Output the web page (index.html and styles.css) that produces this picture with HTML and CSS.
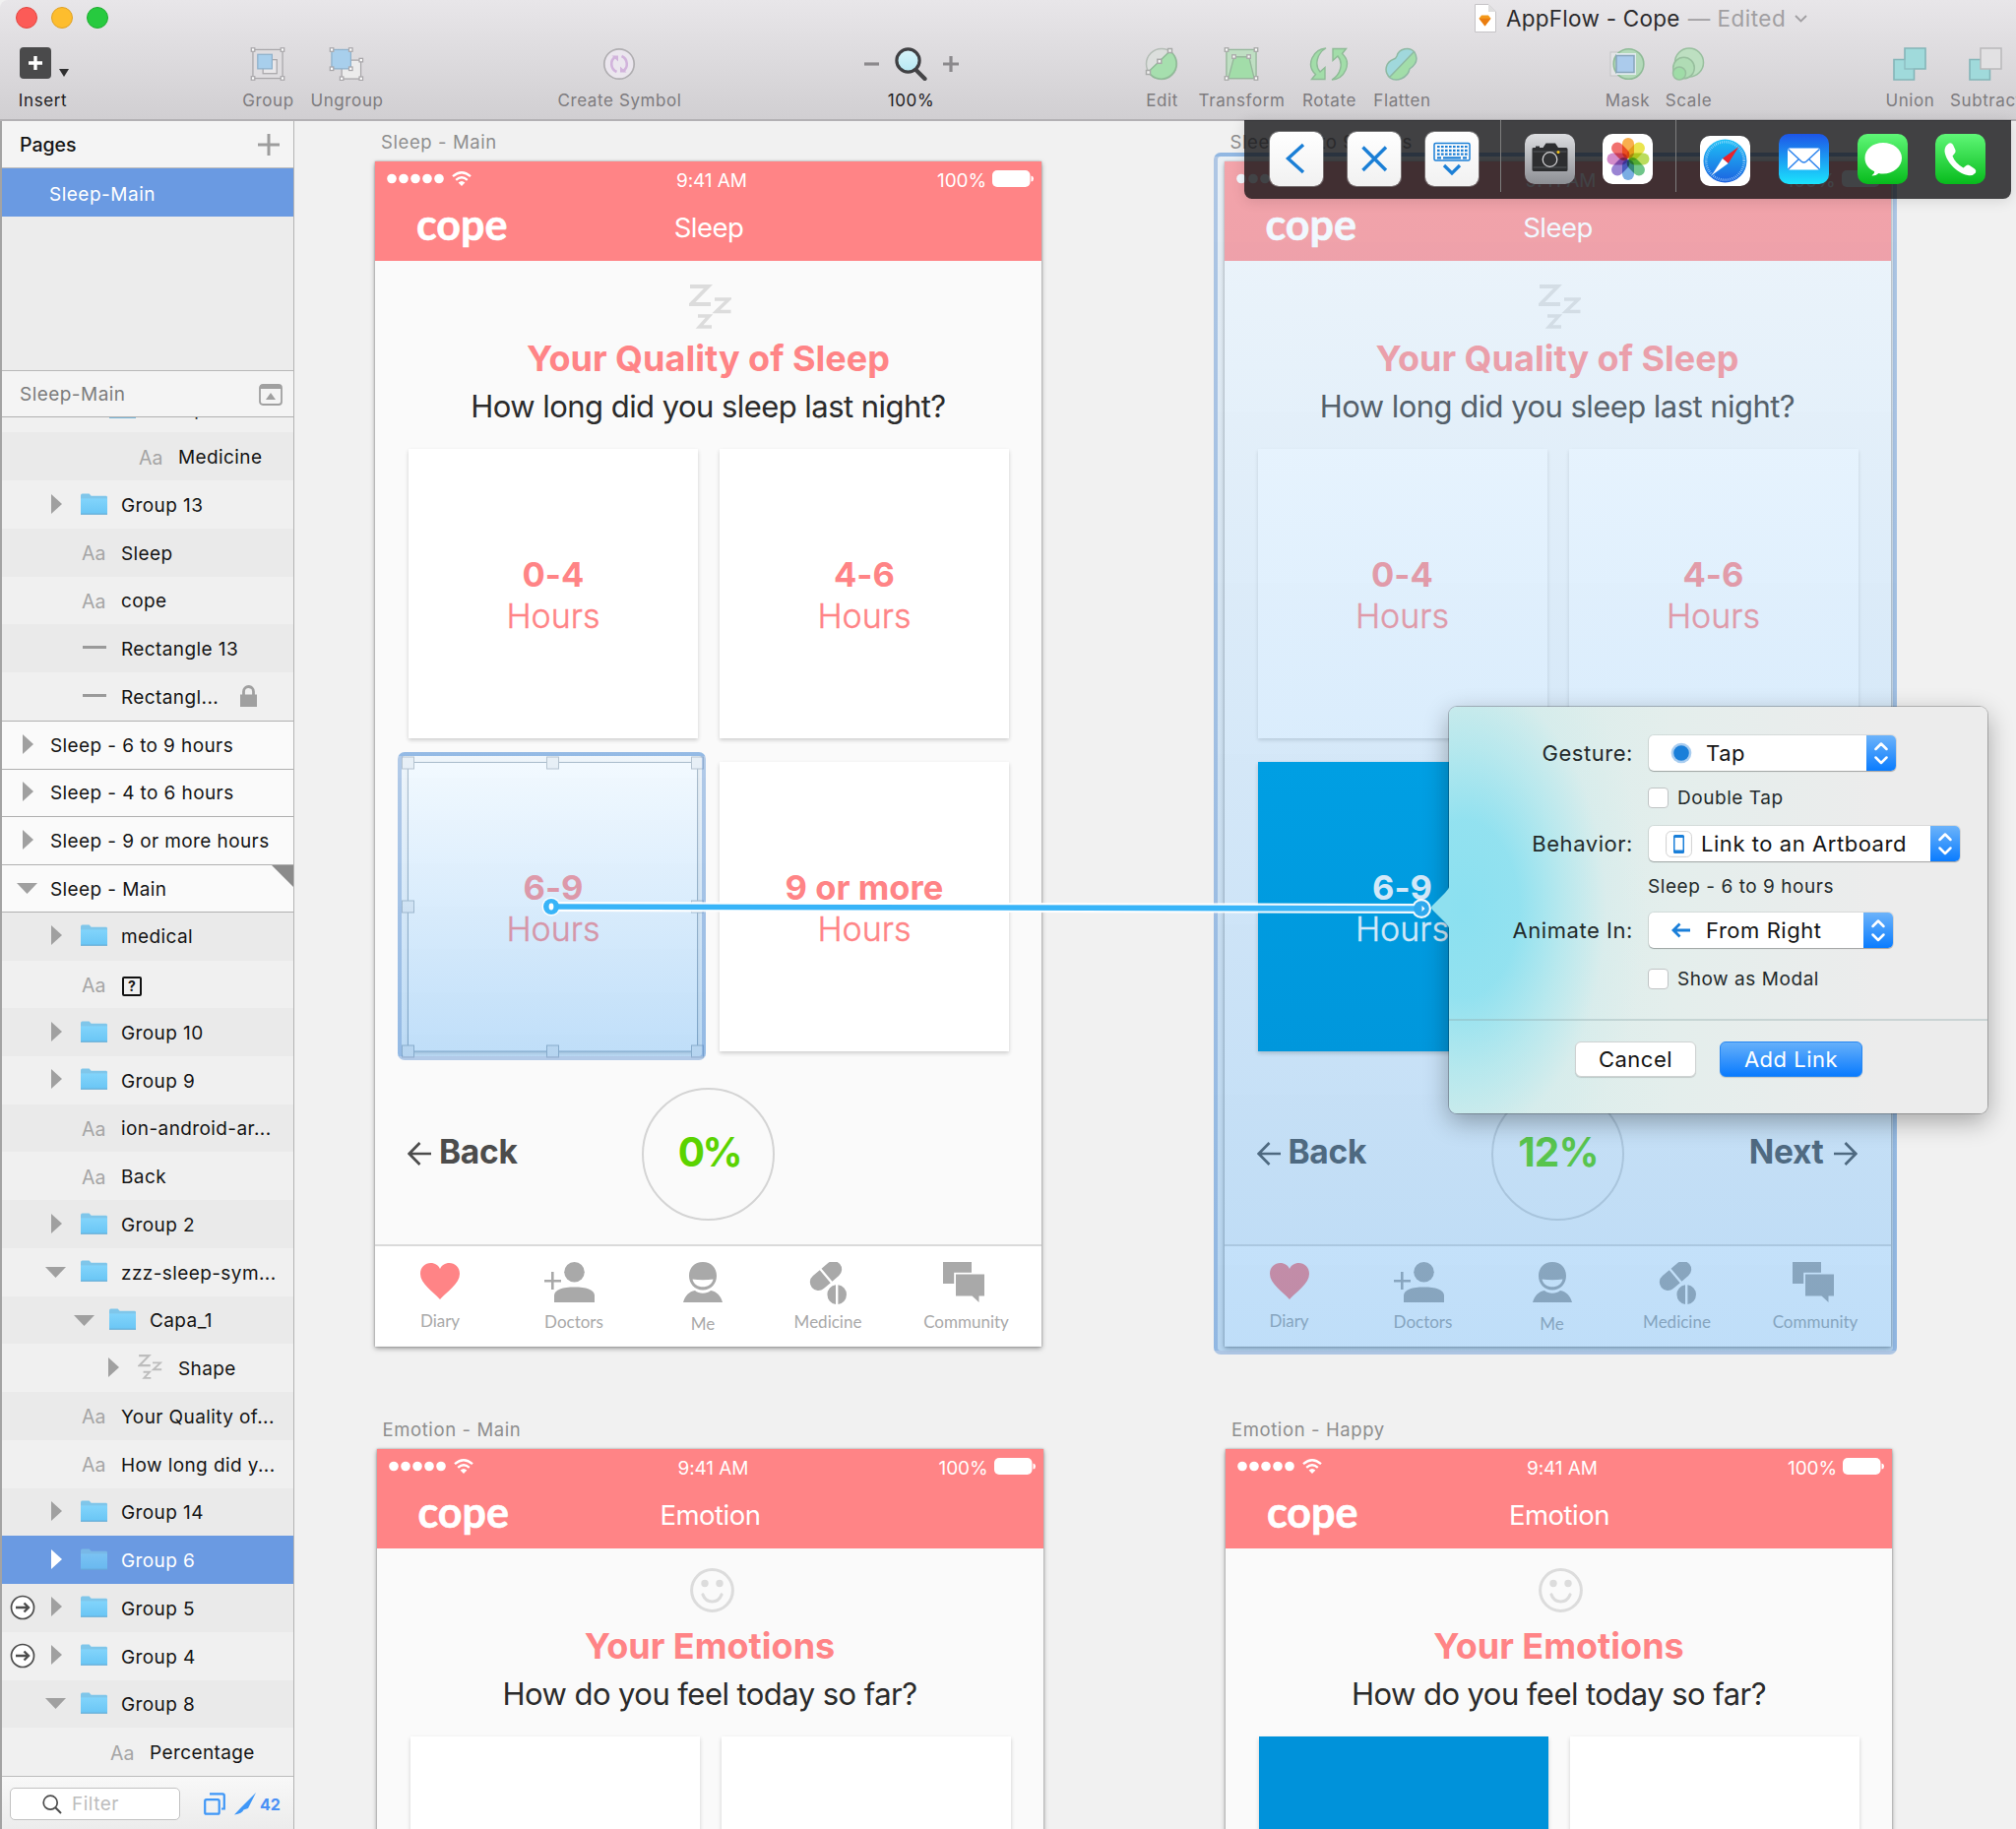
FILE: index.html
```html
<!DOCTYPE html>
<html lang="en">
<head>
<meta charset="utf-8">
<title>AppFlow - Cope</title>
<link rel="stylesheet" href="styles.css">
</head>
<body>
<svg class="defs" width="0" height="0" aria-hidden="true">
  <defs>
    <linearGradient id="g-folder" x1="0" y1="0" x2="0" y2="1"><stop offset="0" stop-color="#82d4fb"/><stop offset="1" stop-color="#6ac6f5"/></linearGradient>
    <linearGradient id="g-glass" x1="0" y1="0" x2="0" y2="1"><stop offset="0" stop-color="#d9f5fa"/><stop offset="1" stop-color="#b5e8f2"/></linearGradient>
    <linearGradient id="g-safari" x1="0" y1="0" x2="0" y2="1"><stop offset="0" stop-color="#1fc1f6"/><stop offset="1" stop-color="#1c62e0"/></linearGradient>
    <linearGradient id="g-cam" x1="0" y1="0" x2="0" y2="1"><stop offset="0" stop-color="#dcdde0"/><stop offset="1" stop-color="#8d8f94"/></linearGradient>
  </defs>
  <symbol id="folder" viewBox="0 0 27 22"><path d="M0 2.5Q0 .6 1.6.6H8.6L10.6 2.8H25.6Q27 2.8 27 4.2V21.4H0Z" fill="#7fc6ea"/><path d="M0 5.4H27V20.8H0Z" fill="url(#g-folder)"/><path d="M0 21.2H27" stroke="#5fa9d3" stroke-width="1"/></symbol>
  <symbol id="tri-r" viewBox="0 0 11 20"><path d="M0 0L11 10L0 20Z" fill="currentColor"/></symbol>
  <symbol id="tri-d" viewBox="0 0 21 11"><path d="M0 0H21L10.500 11Z" fill="currentColor"/></symbol>
  <symbol id="zzz" viewBox="0 0 43 45"><g fill="none" stroke="currentColor"><path d="M1 2H19.500L2 20H22" stroke-width="3.800"/><path d="M26 15H40.500L27.500 27.500H42.500" stroke-width="3.400"/><path d="M9 32H20.500L10.500 43H23" stroke-width="3.400"/></g></symbol>
  <symbol id="smile" viewBox="0 0 45 45"><circle cx="22.500" cy="22.500" r="20.900" fill="none" stroke="currentColor" stroke-width="3"/><circle cx="15" cy="15.500" r="3.700" fill="currentColor"/><circle cx="30" cy="15.500" r="3.700" fill="currentColor"/><path d="M13 27C15 32 18.500 34 22.500 34S30 32 32 27" fill="none" stroke="currentColor" stroke-width="3.200" stroke-linecap="round"/></symbol>
  <symbol id="dots" viewBox="0 0 58 11"><g fill="currentColor"><circle cx="5" cy="5.500" r="4.800"/><circle cx="17" cy="5.500" r="4.800"/><circle cx="29" cy="5.500" r="4.800"/><circle cx="41" cy="5.500" r="4.800"/><circle cx="53" cy="5.500" r="4.800"/></g></symbol>
  <symbol id="wifi" viewBox="0 0 20 15"><g fill="none" stroke="currentColor" stroke-width="2.300"><path d="M1 5.200Q10-2.800 19 5.200"/><path d="M4.200 8.800Q10 3.800 15.800 8.800"/></g><path d="M6.600 11.400Q10 8.400 13.400 11.400L10 15Z" fill="currentColor"/></symbol>
  <symbol id="battery" viewBox="0 0 42 17"><rect width="38.500" height="17" rx="5" fill="currentColor"/><path d="M39.500 5.500Q42 6 42 8.500T39.500 11.500Z" fill="currentColor"/></symbol>
  <symbol id="heart" viewBox="0 0 40 37"><path d="M20 37C13 29 0 21 0 11C0 4 5 0 10.500 0C15 0 18.500 2.500 20 6C21.500 2.500 25 0 29.500 0C35 0 40 4 40 11C40 21 27 29 20 37Z" fill="currentColor"/></symbol>
  <symbol id="doctor" viewBox="0 0 51 41"><g fill="currentColor"><circle cx="30.500" cy="10.300" r="10.300"/><path d="M10 41V34C10 28 19 25.500 30.500 25.500S51 28 51 34V41Z"/><path d="M7 10H9.600V18H17V20.600H9.600V28H7V20.600H0V18H7Z"/></g></symbol>
  <symbol id="me" viewBox="0 0 40 41"><g fill="currentColor"><path d="M20 0C28.500 0 34 6 34 14S28.500 28.500 20 28.500S6 22 6 14S11.500 0 20 0ZM9.500 17.500C10.500 22.500 15 25.300 20 25.300S29.500 22.500 30.500 17.500Q20 19 9.500 17.500Z"/><path d="M0 41C2 34 6 30 12 29C16 32.500 24 32.500 28 29C34 30 38 34 40 41Z"/></g></symbol>
  <symbol id="pills" viewBox="0 0 38 43"><g transform="rotate(-40 17 14)"><path d="M16 5.500H7A8.500 8.500 0 0 0 7 22.500H16Z" fill="currentColor"/><path d="M18.300 5.500H27A8.500 8.500 0 0 1 27 22.500H18.300Z" fill="currentColor"/></g><path d="M27 23.200A10 10 0 0 0 27 43ZM29.400 23.200A10 10 0 0 1 29.400 43Z" fill="currentColor"/></symbol>
  <symbol id="chat" viewBox="0 0 42 41"><path d="M0 0H29V10.800H11.200V22H0Z" fill="currentColor"/><path d="M13 12.500H42V34.500H36.500V41L29.500 34.500H13Z" fill="currentColor"/></symbol>
  <symbol id="arrow-l" viewBox="0 0 24 24"><path d="M24 12H2M12.500 1L1.700 12L12.500 23" fill="none" stroke="currentColor" stroke-width="2.700"/></symbol>
  <symbol id="arrow-r" viewBox="0 0 24 24"><path d="M0 12H22M11.500 1L22.300 12L11.500 23" fill="none" stroke="currentColor" stroke-width="2.700"/></symbol>
  <symbol id="go" viewBox="0 0 26 26"><circle cx="13" cy="13" r="11.500" fill="#fff" stroke="#4d4d4d" stroke-width="1.700"/><path d="M6 13H18M14.500 8.500L19 13L14.500 17.500" fill="none" stroke="#4d4d4d" stroke-width="2.400"/></symbol>
  <symbol id="updown" viewBox="0 0 30 36"><path d="M9.500 14L15 8.500L20.500 14M9.500 22.500L15 28L20.500 22.500" fill="none" stroke="#fff" stroke-width="2.500" stroke-linecap="round" stroke-linejoin="round"/></symbol>
</svg>

<div class="window">
  <header class="titlebar">
    <div class="title-row">
      <div class="lights"><i class="light red"></i><i class="light yellow"></i><i class="light green"></i></div>
      <div class="doc">
        <svg class="doc-icon" viewBox="0 0 22 29"><path d="M.5.5H14L21.500 8V28.500H.5Z" fill="#fff" stroke="#c5c3c6"/><path d="M14 .5V8H21.500Z" fill="#dedede"/><path d="M7 11.500H14L16.500 14.800L10.500 22.500L4.500 14.800Z" fill="#f49a1c"/><path d="M4.500 14.800H16.500L10.500 22.500Z" fill="#ea7d11"/></svg>
        <span class="doc-name">AppFlow - Cope</span><span class="doc-state">— Edited</span>
        <svg class="doc-chev" viewBox="0 0 13 8"><path d="M1 1L6.500 6.500L12 1" fill="none" stroke="#a19fa2" stroke-width="1.800"/></svg>
      </div>
    </div>
    <nav class="tools">
      <div class="tool t-insert strong">
        <div class="insert"><svg width="32" height="32" viewBox="0 0 32 32"><rect width="32" height="32" rx="4" fill="#4a4a4b"/><path d="M16 9V23M9 16H23" stroke="#fff" stroke-width="3.400"/></svg><svg width="10" height="8" viewBox="0 0 10 8"><path d="M0 0H10L5 8Z" fill="#2f2f30"/></svg></div>
        <span>Insert</span>
      </div>
      <div class="tool t-group">
        <svg width="36" height="35" viewBox="0 0 36 35" fill="#e9e7e9" stroke="#a9a7aa" stroke-width="1.300"><rect x="2.500" y="2.500" width="31" height="30" fill="#dfdde0"/><rect x="13" y="13" width="14.500" height="14.500"/><rect x="7.500" y="7.500" width="15" height="15" fill="#a8cfec" stroke="#8fb1cb"/><g fill="#fff"><rect x=".8" y=".8" width="3.600" height="3.600"/><rect x="31.600" y=".8" width="3.600" height="3.600"/><rect x=".8" y="30.600" width="3.600" height="3.600"/><rect x="31.600" y="30.600" width="3.600" height="3.600"/></g></svg>
        <span>Group</span>
      </div>
      <div class="tool t-group2">
        <svg width="36" height="35" viewBox="0 0 36 35" fill="#ececec" stroke="#a9a7aa" stroke-width="1.300"><rect x="13" y="13.500" width="20" height="19.500"/><rect x="2.500" y="2.500" width="20" height="20" fill="#a8cfec" stroke="#8fb1cb"/><g fill="#fff"><rect x=".8" y=".8" width="3.600" height="3.600"/><rect x="20.600" y=".8" width="3.600" height="3.600"/><rect x=".8" y="20.600" width="3.600" height="3.600"/><rect x="20.600" y="20.600" width="3.600" height="3.600"/><rect x="31.400" y="11.700" width="3.600" height="3.600"/><rect x="31.400" y="30.900" width="3.600" height="3.600"/><rect x="11.200" y="30.900" width="3.600" height="3.600"/></g></svg>
        <span>Ungroup</span>
      </div>
      <div class="tool t-symbol">
        <svg width="34" height="34" viewBox="0 0 34 34"><circle cx="17" cy="17" r="15.200" fill="#ebe6ee" stroke="#b0aeb1" stroke-width="1.700"/><g fill="none" stroke="#d2b4dc" stroke-width="2.600"><path d="M14.500 25C8 22 7.500 13.500 13 9.800"/><path d="M19.500 9C26 12 26.500 20.500 21 24.200"/></g><path d="M9.500 8.500H16V14.500ZM24.500 25.500H18V19.500Z" fill="#d2b4dc"/></svg>
        <span>Create Symbol</span>
      </div>
      <div class="tool t-zoom strong">
        <div class="zoomer"><svg width="15" height="16" viewBox="0 0 15 16"><path d="M0 8H15" stroke="#8b898c" stroke-width="3.200"/></svg><svg width="33" height="34" viewBox="0 0 33 34"><path d="M20 21.500L30.500 32" stroke="#454547" stroke-width="4.200" stroke-linecap="round"/><circle cx="13.500" cy="13.500" r="11.600" fill="url(#g-glass)" stroke="#404043" stroke-width="3.200"/></svg><svg width="16" height="16" viewBox="0 0 16 16"><path d="M0 8H16M8 0V16" stroke="#8b898c" stroke-width="3.200"/></svg></div>
        <span>100%</span>
      </div>
      <div class="tool t-edit">
        <svg width="34" height="34" viewBox="0 0 34 34" stroke="#8fbb97" stroke-width="1.500"><circle cx="17" cy="17" r="15.500" fill="#dcdfdd" stroke="#b4bdb6"/><path d="M25.500 4A15.500 15.500 0 1 1 3.500 25Z" fill="#a6dfae"/><g fill="#f3f3f3" stroke="#a9aaa9"><rect x="23.500" y="1.500" width="4" height="4"/><rect x="12.800" y="12.300" width="4" height="4"/><rect x="1.500" y="23.500" width="4" height="4"/></g></svg>
        <span>Edit</span>
      </div>
      <div class="tool t-transform">
        <svg width="36" height="35" viewBox="0 0 36 35" stroke="#97b79c" stroke-width="1.400"><rect x="2.500" y="2.500" width="31" height="30" fill="#bfdfc3"/><path d="M10.500 10H26L31.500 32.500H4.500Z" fill="#a2dda9"/><g fill="#fff" stroke="#a9aaa9"><rect x=".8" y=".8" width="3.600" height="3.600"/><rect x="31.600" y=".8" width="3.600" height="3.600"/><rect x=".8" y="30.600" width="3.600" height="3.600"/><rect x="31.600" y="30.600" width="3.600" height="3.600"/><rect x="8.500" y="8" width="3.600" height="3.600"/><rect x="24" y="8" width="3.600" height="3.600"/></g></svg>
        <span>Transform</span>
      </div>
      <div class="tool t-rotate">
        <svg width="40" height="34" viewBox="0 0 40 34" fill="#a2dda9" stroke="#8fbb97" stroke-width="1.400"><path d="M17 1C4 2 -4 18 6.500 27.500L2.500 32.500H16V20.500L11 25C5 18 8 6 17 1Z"/><path d="M23 33C36 32 44 16 33.500 6.500L37.500 1.500H24V13.500L29 9C35 16 32 28 23 33Z"/></svg>
        <span>Rotate</span>
      </div>
      <div class="tool t-flatten">
        <svg width="34" height="34" viewBox="0 0 34 34"><path d="M12 9C14 1 25 -1 30 5C34 12 31 18 25 22C23 31 12 36 5 31C-2 24 1 15 9 12Q11 11.500 12 9Z" fill="#a2dda9"/><path d="M29 5C24 -1 14 1 12 9Q11 11.500 9 12C1 15 -2 24 5 30Z" fill="#a0d8dc"/><path d="M12 9C14 1 25 -1 30 5C34 12 31 18 25 22C23 31 12 36 5 31C-2 24 1 15 9 12Q11 11.500 12 9ZM29 5L5 30" fill="none" stroke="#8fb9a3" stroke-width="1.500"/></svg>
        <span>Flatten</span>
      </div>
      <div class="tool t-mask">
        <svg width="36" height="34" viewBox="0 0 36 34"><rect x="1" y="5" width="25" height="24" fill="#e4e4e6" stroke="#c4c3c5"/><circle cx="19.500" cy="17" r="15.300" fill="#b3d9b9" stroke="#8fbb97" stroke-width="1.600"/><path d="M7 6H27V28H7Z" fill="#e2ebee"/><rect x="7" y="8.500" width="18" height="17" fill="#abcbec" stroke="#88a5bb" stroke-width="1.500"/></svg>
        <span>Mask</span>
      </div>
      <div class="tool t-scale">
        <svg width="34" height="34" viewBox="0 0 34 34" stroke="#98bf9e" stroke-width="1.500"><circle cx="18" cy="15.500" r="14.500" fill="#bddfc1"/><circle cx="12.500" cy="21" r="10.800" fill="#b0dcb5"/><circle cx="8" cy="26.500" r="6.500" fill="#9fdca7"/></svg>
        <span>Scale</span>
      </div>
      <div class="tool t-union">
        <svg width="34" height="34" viewBox="0 0 34 34"><path d="M12 1H33V22H21.500V33H1V12.500H12Z" fill="#a0dadb" stroke="#84b5b8" stroke-width="1.600"/><path d="M12 12.500V22H21.500" fill="none" stroke="#8fbfc2" stroke-width="1.500"/></svg>
        <span>Union</span>
      </div>
      <div class="tool t-subtract">
        <svg width="34" height="34" viewBox="0 0 34 34"><path d="M1 12.500H21.500V33H1Z" fill="#a0dadb" stroke="#84b5b8" stroke-width="1.600"/><rect x="12" y="1" width="21" height="21" fill="#e2e1e3" stroke="#b9b8ba" stroke-width="1.500"/></svg>
        <span>Subtract</span>
      </div>
    </nav>
  </header>

  <div class="main">
    <aside class="sidebar">
      <div class="pages-head"><span>Pages</span><svg width="22" height="22" viewBox="0 0 22 22"><path d="M11 0V22M0 11H22" stroke="#9d9d9d" stroke-width="3"/></svg></div>
      <div class="page-item">Sleep-Main</div>
      <div class="pages-rest"></div>
      <div class="layers-head"><span>Sleep-Main</span><svg width="24" height="22" viewBox="0 0 24 22"><rect x="1" y="1" width="22" height="20" rx="3" fill="none" stroke="#a0a0a0" stroke-width="1.800"/><path d="M1 1.500H23V5H1Z" fill="#a0a0a0"/><path d="M12 9L17 16H7Z" fill="#a0a0a0"/></svg></div>
      <div class="layers">
        <div class="row l2"><svg class="ic"><use href="#folder"/></svg><b>Group</b></div>
        <div class="row l3"><i class="aa">Aa</i><b>Medicine</b></div>
        <div class="row l1"><svg class="tr"><use href="#tri-r"/></svg><svg class="ic"><use href="#folder"/></svg><b>Group 13</b></div>
        <div class="row l1"><i class="aa">Aa</i><b>Sleep</b></div>
        <div class="row l1"><i class="aa">Aa</i><b>cope</b></div>
        <div class="row l1"><i class="dash"></i><b>Rectangle 13</b></div>
        <div class="row l1"><i class="dash"></i><b>Rectangl...</b><svg class="lock" viewBox="0 0 17 22"><path d="M3.500 10V6.500A5 5 0 0 1 13.500 6.500V10" fill="none" stroke="#a0a0a0" stroke-width="2.800"/><rect y="9.500" width="17" height="12.500" fill="#a0a0a0"/></svg></div>
        <div class="row board"><svg class="tr"><use href="#tri-r"/></svg><b>Sleep - 6 to 9 hours</b></div>
        <div class="row board"><svg class="tr"><use href="#tri-r"/></svg><b>Sleep - 4 to 6 hours</b></div>
        <div class="row board"><svg class="tr"><use href="#tri-r"/></svg><b>Sleep - 9 or more hours</b></div>
        <div class="row board open"><svg class="td"><use href="#tri-d"/></svg><b>Sleep - Main</b><i class="corner"></i></div>
        <div class="row l1"><svg class="tr"><use href="#tri-r"/></svg><svg class="ic"><use href="#folder"/></svg><b>medical</b></div>
        <div class="row l1"><i class="aa">Aa</i><b class="unknown">?</b></div>
        <div class="row l1"><svg class="tr"><use href="#tri-r"/></svg><svg class="ic"><use href="#folder"/></svg><b>Group 10</b></div>
        <div class="row l1"><svg class="tr"><use href="#tri-r"/></svg><svg class="ic"><use href="#folder"/></svg><b>Group 9</b></div>
        <div class="row l1"><i class="aa">Aa</i><b>ion-android-ar...</b></div>
        <div class="row l1"><i class="aa">Aa</i><b>Back</b></div>
        <div class="row l1"><svg class="tr"><use href="#tri-r"/></svg><svg class="ic"><use href="#folder"/></svg><b>Group 2</b></div>
        <div class="row l1"><svg class="td"><use href="#tri-d"/></svg><svg class="ic"><use href="#folder"/></svg><b>zzz-sleep-sym...</b></div>
        <div class="row l2"><svg class="td"><use href="#tri-d"/></svg><svg class="ic"><use href="#folder"/></svg><b>Capa_1</b></div>
        <div class="row l3"><svg class="tr"><use href="#tri-r"/></svg><svg class="ic zz"><use href="#zzz"/></svg><b>Shape</b></div>
        <div class="row l1"><i class="aa">Aa</i><b>Your Quality of...</b></div>
        <div class="row l1"><i class="aa">Aa</i><b>How long did y...</b></div>
        <div class="row l1"><svg class="tr"><use href="#tri-r"/></svg><svg class="ic"><use href="#folder"/></svg><b>Group 14</b></div>
        <div class="row l1 selected"><svg class="tr"><use href="#tri-r"/></svg><svg class="ic"><use href="#folder"/></svg><b>Group 6</b></div>
        <div class="row l1"><svg class="go"><use href="#go"/></svg><svg class="tr"><use href="#tri-r"/></svg><svg class="ic"><use href="#folder"/></svg><b>Group 5</b></div>
        <div class="row l1"><svg class="go"><use href="#go"/></svg><svg class="tr"><use href="#tri-r"/></svg><svg class="ic"><use href="#folder"/></svg><b>Group 4</b></div>
        <div class="row l1"><svg class="td"><use href="#tri-d"/></svg><svg class="ic"><use href="#folder"/></svg><b>Group 8</b></div>
        <div class="row l2"><i class="aa">Aa</i><b>Percentage</b></div>
      </div>
      <div class="filter">
        <div class="filter-box"><svg width="20" height="20" viewBox="0 0 20 20"><circle cx="8.200" cy="8.200" r="7" fill="none" stroke="#4b4b4b" stroke-width="1.700"/><path d="M13.300 13.300L19 19" stroke="#4b4b4b" stroke-width="2"/></svg><span>Filter</span></div>
        <svg width="22" height="23" viewBox="0 0 22 23"><rect x="1.200" y="7.200" width="14.500" height="14.500" rx="1.500" fill="none" stroke="#3f97f7" stroke-width="2.200"/><path d="M6 1.300H19Q20.800 1.300 20.800 3V16.500H18" fill="none" stroke="#3f97f7" stroke-width="2.200"/></svg>
        <svg width="22" height="23" viewBox="0 0 22 23"><path d="M22 0L14 16L9.500 17.500Q8 21.500 0 22.500L7.500 14.500Z" fill="#3f97f7"/></svg>
        <span class="count">42</span>
      </div>
    </aside>

    <section class="canvas">
      <article class="artboard pos-a">
        <h2>Sleep - Main</h2>
        <div class="screen">
          <div class="app-head">
            <div class="status"><svg class="dots"><use href="#dots"/></svg><svg class="wifi"><use href="#wifi"/></svg><span class="time">9:41 AM</span><span class="pct">100%</span><svg class="battery"><use href="#battery"/></svg></div>
            <div class="bar"><span class="brand">cope</span><span class="name">Sleep</span></div>
          </div>
          <div class="hero"><svg class="zzz"><use href="#zzz"/></svg><h3>Your Quality of Sleep</h3><p>How long did you sleep last night?</p></div>
          <div class="cards">
            <div class="card"><strong>0-4</strong><span>Hours</span></div><div class="card"><strong>4-6</strong><span>Hours</span></div>
            <div class="card"><strong>6-9</strong><span>Hours</span></div><div class="card"><strong>9 or more</strong><span>Hours</span></div>
          </div>
          <div class="steps"><div class="step"><svg><use href="#arrow-l"/></svg><span>Back</span></div><div class="ring">0%</div></div>
          <div class="tabs">
            <div class="tab on"><svg class="i-heart"><use href="#heart"/></svg><span>Diary</span></div>
            <div class="tab doc-tab"><svg class="i-doctor"><use href="#doctor"/></svg><span>Doctors</span></div>
            <div class="tab me-tab"><svg class="i-me"><use href="#me"/></svg><span>Me</span></div>
            <div class="tab"><svg class="i-pills"><use href="#pills"/></svg><span>Medicine</span></div>
            <div class="tab"><svg class="i-chat"><use href="#chat"/></svg><span>Community</span></div>
          </div>
        </div>
      </article>

      <article class="artboard pos-b">
        <h2>Sleep - 6 to 9 hours</h2>
        <div class="screen">
          <div class="app-head">
            <div class="status"><svg class="dots"><use href="#dots"/></svg><svg class="wifi"><use href="#wifi"/></svg><span class="time">9:41 AM</span><span class="pct">100%</span><svg class="battery"><use href="#battery"/></svg></div>
            <div class="bar"><span class="brand">cope</span><span class="name">Sleep</span></div>
          </div>
          <div class="hero"><svg class="zzz"><use href="#zzz"/></svg><h3>Your Quality of Sleep</h3><p>How long did you sleep last night?</p></div>
          <div class="cards">
            <div class="card"><strong>0-4</strong><span>Hours</span></div><div class="card"><strong>4-6</strong><span>Hours</span></div>
            <div class="card chosen"><strong>6-9</strong><span>Hours</span></div><div class="card"></div>
          </div>
          <div class="steps"><div class="step"><svg><use href="#arrow-l"/></svg><span>Back</span></div><div class="ring p12">12%</div><div class="step next"><span>Next</span><svg><use href="#arrow-r"/></svg></div></div>
          <div class="tabs">
            <div class="tab on"><svg class="i-heart"><use href="#heart"/></svg><span>Diary</span></div>
            <div class="tab doc-tab"><svg class="i-doctor"><use href="#doctor"/></svg><span>Doctors</span></div>
            <div class="tab me-tab"><svg class="i-me"><use href="#me"/></svg><span>Me</span></div>
            <div class="tab"><svg class="i-pills"><use href="#pills"/></svg><span>Medicine</span></div>
            <div class="tab"><svg class="i-chat"><use href="#chat"/></svg><span>Community</span></div>
          </div>
        </div>
      </article>

      <article class="artboard pos-c">
        <h2>Emotion - Main</h2>
        <div class="screen">
          <div class="app-head">
            <div class="status"><svg class="dots"><use href="#dots"/></svg><svg class="wifi"><use href="#wifi"/></svg><span class="time">9:41 AM</span><span class="pct">100%</span><svg class="battery"><use href="#battery"/></svg></div>
            <div class="bar"><span class="brand">cope</span><span class="name">Emotion</span></div>
          </div>
          <div class="hero"><svg class="smile"><use href="#smile"/></svg><h3>Your Emotions</h3><p>How do you feel today so far?</p></div>
          <div class="cards"><div class="card"></div><div class="card"></div></div>
        </div>
      </article>

      <article class="artboard pos-d">
        <h2>Emotion - Happy</h2>
        <div class="screen">
          <div class="app-head">
            <div class="status"><svg class="dots"><use href="#dots"/></svg><svg class="wifi"><use href="#wifi"/></svg><span class="time">9:41 AM</span><span class="pct">100%</span><svg class="battery"><use href="#battery"/></svg></div>
            <div class="bar"><span class="brand">cope</span><span class="name">Emotion</span></div>
          </div>
          <div class="hero"><svg class="smile"><use href="#smile"/></svg><h3>Your Emotions</h3><p>How do you feel today so far?</p></div>
          <div class="cards"><div class="card blue"></div><div class="card"></div></div>
        </div>
      </article>
    </section>
  </div>

  <svg class="resize" width="312" height="314" viewBox="0 0 312 314"><g fill="none" stroke="#9aa9b8" stroke-width="1"><rect x="10.500" y="10.500" width="294" height="293.500"/></g><g fill="#f0f1f2" stroke="#aab3bc" stroke-width="1"><rect x="4.500" y="5" width="12" height="12"/><rect x="151.500" y="5" width="12" height="12"/><rect x="298.500" y="5" width="12" height="12"/><rect x="4.500" y="151" width="12" height="12"/><rect x="298.500" y="151" width="12" height="12"/><rect x="4.500" y="298" width="12" height="12"/><rect x="151.500" y="298" width="12" height="12"/><rect x="298.500" y="298" width="12" height="12"/></g></svg>
  <div class="highlight hl-card"></div>
  <div class="highlight hl-board"></div>

  <svg class="link" width="920" height="30" viewBox="0 0 920 30">
    <g stroke="#fff" fill="#fff" opacity=".95"><path d="M20 13L904 15" stroke-width="10"/><circle cx="20" cy="13" r="9.500" stroke="none"/><circle cx="904" cy="15" r="10" stroke="none"/></g>
    <path d="M20 13L904 15" stroke="#38b4f8" stroke-width="5.600"/>
    <circle cx="20" cy="13" r="8" fill="#38b4f8"/><ellipse cx="20" cy="13" rx="2.400" ry="3.400" fill="#fff"/>
    <circle cx="904" cy="15" r="7.800" fill="#2fa9ee"/><path d="M904.500 12L907.500 15L904.500 18Z" fill="#fff"/>
  </svg>

  <div class="dock">
    <div class="key"><svg viewBox="0 0 54 54"><path d="M34 13L18.500 27L34 41" fill="none" stroke="#1b7fd6" stroke-width="3.400"/></svg></div>
    <div class="key"><svg viewBox="0 0 54 54"><path d="M15.500 15.500L39 39M39 15.500L15.500 39" fill="none" stroke="#1b7fd6" stroke-width="3.400"/></svg></div>
    <div class="key"><svg viewBox="0 0 54 54"><rect x="9" y="11.500" width="36" height="17.500" rx="1.500" fill="none" stroke="#1b7fd6" stroke-width="1.500"/><g stroke="#1b7fd6" stroke-width="2.200"><path d="M12 15H43M12 18.800H43M12 22.600H43" stroke-dasharray="2.600 1.400"/><path d="M12 26.300H16M18 26.300H36M38 26.300H42"/></g><path d="M19 34L27 42L35 34" fill="none" stroke="#1b7fd6" stroke-width="3.200"/></svg></div>
    <i class="sep s1"></i>
    <svg class="app a1" viewBox="0 0 51 51"><rect width="51" height="51" rx="10" fill="url(#g-cam)"/><path d="M7.500 15Q7.500 14 9 14H18.500L21.500 9.500H31L34 14H42Q43.500 14 43.500 15.500V36.500Q43.500 38 42 38H9.500Q7.500 38 7.500 36.500Z" fill="#2d2e30"/><path d="M11 12.500H15V14H11Z" fill="#2d2e30"/><path d="M8.500 18H42.500M8.500 34H42.500" stroke="#55565a"/><circle cx="25.500" cy="26" r="7.300" fill="#323335" stroke="#d0d0d2" stroke-width="1.300"/><circle cx="34" cy="18.500" r="1.500" fill="#f5c518"/></svg>
    <svg class="app a2" viewBox="0 0 51 51"><rect width="51" height="51" rx="10" fill="#fff"/><g class="petals"><rect x="20" y="4" width="12" height="21" rx="6" fill="#f9a63a"/><rect x="20" y="4" width="12" height="21" rx="6" fill="#e8e23c" transform="rotate(45 26 25.500)"/><rect x="20" y="4" width="12" height="21" rx="6" fill="#b3d84a" transform="rotate(90 26 25.500)"/><rect x="20" y="4" width="12" height="21" rx="6" fill="#5fbf7c" transform="rotate(135 26 25.500)"/><rect x="20" y="4" width="12" height="21" rx="6" fill="#6ba4e0" transform="rotate(180 26 25.500)"/><rect x="20" y="4" width="12" height="21" rx="6" fill="#8f76cf" transform="rotate(225 26 25.500)"/><rect x="20" y="4" width="12" height="21" rx="6" fill="#cf7fc4" transform="rotate(270 26 25.500)"/><rect x="20" y="4" width="12" height="21" rx="6" fill="#f0615f" transform="rotate(315 26 25.500)"/></g></svg>
    <i class="sep s2"></i>
    <svg class="app a3" viewBox="0 0 51 51"><rect width="51" height="51" rx="10" fill="#fff"/><circle cx="25.500" cy="25.500" r="22" fill="url(#g-safari)"/><circle cx="25.500" cy="25.500" r="19.300" fill="none" stroke="#bfe2fb" stroke-width="2.600" stroke-dasharray=".6 1.420"/><path d="M39.500 11L28.600 28L22.800 23Z" fill="#e9222c"/><path d="M22.800 23L28.600 28L12 40Z" fill="#fff"/></svg>
    <svg class="app a4" viewBox="0 0 51 51"><defs><linearGradient id="g-mail" x1="0" y1="0" x2="0" y2="1"><stop offset="0" stop-color="#1d55e8"/><stop offset="1" stop-color="#1be4fd"/></linearGradient></defs><rect width="51" height="51" rx="10" fill="url(#g-mail)"/><rect x="9" y="14.500" width="33" height="22" rx="2" fill="#fff"/><path d="M9.500 15.500L23 28Q25.500 30 28 28L41.500 15.500M9.500 36L20.500 25.500M41.500 36L30.500 25.500" fill="none" stroke="#2f86ee" stroke-width="1.600"/></svg>
    <svg class="app a5" viewBox="0 0 51 51"><defs><linearGradient id="g-green" x1="0" y1="0" x2="0" y2="1"><stop offset="0" stop-color="#5ff777"/><stop offset="1" stop-color="#07bb1c"/></linearGradient></defs><rect width="51" height="51" rx="10" fill="url(#g-green)"/><path d="M26 9C36.500 9 45 15.800 45 24.500S36.500 40.500 26 40.500Q23.500 40.500 21.500 40Q18.500 42.800 14.500 42.500Q17.500 40.500 17.200 38.200C11 35.500 7.500 30.500 7.500 24.500C7.500 15.800 15.500 9 26 9Z" fill="#fff"/></svg>
    <svg class="app a6" viewBox="0 0 51 51"><rect width="51" height="51" rx="10" fill="url(#g-green)"/><path d="M14 9.500Q16.500 8.500 18 11L20.500 16.500Q21 18.500 19.500 20L17.500 22.500Q20 29.500 28.500 34.500L31 32.500Q33 31 34.800 32L40 35.500Q42 37 41 39.500Q38 43 33 42C21 39.500 10.500 27.500 9.500 17.500Q9.500 12 14 9.500Z" fill="#fff"/></svg>
  </div>

  <div class="popover">
    <svg class="tail" width="21" height="46" viewBox="0 0 21 46"><path d="M21 0Q20 4 16 8L3 21Q1 23 3 25L16 38Q20 42 21 46Z" fill="#8fe0ef"/></svg>
    <div class="form">
      <div class="line r1"><label>Gesture:</label><div class="select w251"><svg class="si dot" viewBox="0 0 22 22"><circle cx="11" cy="11" r="10.300" fill="#a9cdf0"/><circle cx="11" cy="11" r="7.800" fill="#1a7fd9"/></svg><span>Tap</span><svg class="ud" viewBox="0 0 30 36"><use href="#updown"/></svg></div></div>
      <div class="check c1"><i></i><span>Double Tap</span></div>
      <div class="line r2"><label>Behavior:</label><div class="select w316 tightl"><svg class="si phone" viewBox="0 0 27 27"><rect x=".6" y=".6" width="25.800" height="25.800" rx="5" fill="#fff" stroke="#d0d0d0"/><rect x="8" y="4" width="11" height="19" rx="1.500" fill="#1a7fd9"/><rect x="9.500" y="7" width="8" height="12.500" fill="#fff"/></svg><span>Link to an Artboard</span><svg class="ud" viewBox="0 0 30 36"><use href="#updown"/></svg></div></div>
      <div class="hint">Sleep - 6 to 9 hours</div>
      <div class="line r3"><label>Animate In:</label><div class="select w248"><svg class="si" viewBox="0 0 22 22"><path d="M20 11H3M9.500 4.500L3 11L9.500 17.500" fill="none" stroke="#1a7fd9" stroke-width="2.800"/></svg><span>From Right</span><svg class="ud" viewBox="0 0 30 36"><use href="#updown"/></svg></div></div>
      <div class="check c2"><i></i><span>Show as Modal</span></div>
    </div>
    <div class="actions"><button class="btn">Cancel</button><button class="btn primary">Add Link</button></div>
  </div>
</div>
</body>
</html>
```
FILE: styles.css
```css
* { box-sizing: border-box; }
html, body { margin: 0; padding: 0; }
body { width: 2048px; height: 1858px; overflow: hidden; background: #f1f1f1; font-family: Inter, "Liberation Sans", sans-serif; color: #1a1a1a; }
h2, h3, p { margin: 0; font-weight: 400; }
i, b { font-style: normal; font-weight: 400; }
svg { display: block; flex: none; }
.defs { position: absolute; }
.window { position: relative; width: 2048px; height: 1858px; overflow: hidden; display: flex; flex-direction: column; }

/* title bar and toolbar */
.titlebar { height: 123px; flex: none; background: linear-gradient(#e8e6e9, #d1cfd2); border-bottom: 2px solid #b3b1b4; overflow: hidden; border-top-left-radius: 8px; }
.title-row { height: 40px; display: flex; }
.lights { display: flex; gap: 14px; padding: 7px 0 0 16px; }
.light { width: 22px; height: 22px; border-radius: 50%; }
.red { background: #fc5b57; border: 1px solid #e2453f; }
.yellow { background: #fdbd2e; border: 1px solid #dfa023; }
.green { background: #27ca3f; border: 1px solid #1eac2f; }
.doc { display: flex; margin-left: 1388px; height: 37px; align-items: center; font-size: 22.500px; white-space: nowrap; }
.doc-icon { width: 22px; height: 29px; margin-right: 10px; }
.doc-name { color: #2c2b2d; letter-spacing: .25px; }
.doc-state { color: #a19fa2; margin-left: 8px; letter-spacing: .5px; }
.doc-chev { width: 13px; height: 8px; margin-left: 9px; }
.tools { display: flex; padding-top: 8px; height: 83px; }
.tool { display: flex; flex-direction: column; align-items: center; flex: none; color: #7d7b7e; font-size: 17px; line-height: 24px; white-space: nowrap; }
.tool > svg, .tool > div { height: 34px; }
.tool span { margin-top: 8px; letter-spacing: .6px; padding-left: 1px; }
.strong { color: #1d1c1e; }
.insert { display: flex; align-items: flex-end; gap: 8px; padding: 0 0 2px 20px; width: 86px; align-self: flex-start; }
.insert svg:last-child { margin-bottom: 2px; }
.zoomer { display: flex; align-items: center; gap: 16px; padding-left: 2px; }
.t-insert { width: 86px; }
.t-group { width: 80px; margin-left: 146px; }
.t-group2 { width: 80px; }
.t-symbol { width: 200px; margin-left: 137px; }
.t-zoom { width: 200px; margin-left: 96px; }
.t-edit { width: 76px; margin-left: 117px; }
.t-transform { width: 86px; }
.t-rotate { width: 92px; }
.t-flatten { width: 56px; }
.t-mask { width: 58px; margin-left: 172px; }
.t-scale { width: 66px; }
.t-union { width: 80px; margin-left: 152px; }
.t-subtract { width: 74px; }

.main { flex: 1; display: flex; min-height: 0; }

/* sidebar */
.sidebar { width: 299px; flex: none; border-left: 2px solid #a3a3a3; border-right: 1px solid #b4b4b4; display: flex; flex-direction: column; font-size: 19px; color: #141414; background: #ececec; }
.pages-head { height: 48px; background: #f4f4f4; border-bottom: 1px solid #bcbcbc; display: flex; justify-content: space-between; align-items: center; padding: 0 14px 0 18px; font-weight: 500; font-size: 19.500px; }
.page-item { height: 49px; background: #6a9ae2; color: #fff; line-height: 53px; padding-left: 48px; letter-spacing: .5px; }
.pages-rest { height: 157px; border-bottom: 1px solid #b8b8b8; }
.layers-head { height: 47px; background: #f4f4f4; border-bottom: 1px solid #b0b0b0; display: flex; justify-content: space-between; align-items: center; padding: 1px 11px 0 18px; color: #7c7c7c; font-size: 19px; letter-spacing: .45px; }
.layers { flex: 1; min-height: 0; overflow: hidden; display: flex; flex-direction: column; justify-content: flex-end; }
.row { height: 48.74px; flex: none; display: grid; align-items: center; justify-content: start; background: #f0f0f0; grid-template-columns: 50px 29px 42px auto auto; white-space: nowrap; }
.row:nth-child(even) { background: #eaeaea; }
.l2 { grid-template-columns: 79px 29px 42px auto; }
.l3 { grid-template-columns: 108px 29px 42px auto; }
.row > * { grid-row: 1; }
.row b { grid-column: 4; line-height: 46px; padding-top: 2.700px; letter-spacing: .4px; }
.tr { grid-column: 2; width: 11px; height: 20px; color: #a0a0a0; justify-self: start; margin-top: -2px; }
.td { grid-column: 2; width: 21px; height: 11px; color: #a0a0a0; margin-left: -6px; }
.ic, .aa, .dash { grid-column: 3; }
.ic { width: 27px; height: 22px; margin: -2px 0 0 1px; }
.zz { width: 25px; height: 25px; color: #bdbdbd; }
.aa { color: #a5a5a5; font-size: 19.500px; margin-left: 2px; padding-top: 2px; }
.dash { width: 24px; height: 3px; background: #9a9a9a; margin: -2px 0 0 3px; }
.lock { grid-column: 5; width: 17px; height: 22px; margin-left: 22px; }
.go { grid-column: 1; width: 26px; height: 26px; margin-left: 8px; }
.row.board { background: #fafafa; border-top: 1px solid #b0b0b0; grid-template-columns: 21px 28px auto 1fr; justify-content: stretch; }
.row.board b { grid-column: 3; padding-top: 1.600px; }
.row.open { border-bottom: 1px solid #b0b0b0; }
.corner { grid-column: 4; width: 22px; height: 22px; background: #8b8b8b; clip-path: polygon(0 0, 100% 0, 100% 100%); justify-self: end; align-self: start; }
.row.selected { background: #6a9ae2; color: #fff; }
.selected .tr { color: #fff; }
.selected .ic { opacity: .7; }
.row .unknown { border: 2px solid #111; width: 20px; height: 20px; line-height: 16px; padding: 0; font-size: 14px; font-weight: 700; text-align: center; border-radius: 2px; margin: 4px 0 0 1px; letter-spacing: 0; }
.filter { height: 54px; flex: none; border-top: 1px solid #bcbcbc; background: linear-gradient(#f8f8f8, #ececec); display: flex; align-items: center; padding: 2px 0 0 8px; gap: 9px; }
.filter-box { width: 173px; height: 33px; border: 1px solid #c2c2c2; border-radius: 5px; background: #fff; display: flex; align-items: center; gap: 10px; padding-left: 32px; color: #bdbdbd; font-size: 19px; margin-right: 15px; letter-spacing: .5px; }
.count { color: #4a90f5; font-weight: 700; font-size: 16px; margin-left: -5px; }

/* canvas */
.canvas { flex: 1; background: #f1f1f1; }
.artboard { position: absolute; width: 677px; }
.pos-a { left: 381px; top: 133px; }
.pos-b { left: 1243.500px; top: 133px; }
.pos-c { left: 382.500px; top: 1441px; }
.pos-d { left: 1245px; top: 1441px; }
.artboard h2 { height: 31px; line-height: 23px; padding-left: 6px; font-size: 18.500px; color: #8e8e8e; white-space: nowrap; letter-spacing: .6px; }
.screen { background: #fafafa; box-shadow: 0 2px 5px rgba(0,0,0,.35), 0 0 2px rgba(0,0,0,.3); height: 1204px; }
.app-head { height: 101px; background: #ff8486; color: #fff; }
.status { height: 42px; display: grid; grid-template-columns: 66px 228px 265px 55px 42px; padding-left: 12px; font-size: 19px; line-height: 40px; white-space: nowrap; align-items: start; }
.dots { width: 58px; height: 11px; margin-top: 12px; }
.wifi { width: 20px; height: 15px; margin-top: 10px; }
.time { letter-spacing: -.1px; }
.pct { letter-spacing: -.1px; }
.battery { width: 42px; height: 17px; margin-top: 9px; margin-left: 1px; }
.bar { height: 59px; display: grid; grid-template-columns: 1fr auto 1fr; line-height: 50px; }
.brand { font-family: Lato, sans-serif; font-weight: 700; font-size: 43px; padding-left: 42px; line-height: 43px; -webkit-text-stroke: .6px #fff; }
.name { font-size: 27.500px; letter-spacing: -.5px; padding-left: 1px; }
.hero { display: flex; flex-direction: column; align-items: center; padding-top: 24px; }
.zzz { width: 43px; height: 45px; margin-left: 4px; color: #dcdcdc; }
.smile { width: 45px; height: 45px; margin: -4px 0 4px 4px; color: #dcdcdc; }
.hero h3 { margin-top: 8px; line-height: 44px; font-size: 36px; font-weight: 700; color: #ff8486; white-space: nowrap; letter-spacing: 0; }
.hero p { margin-top: 6px; line-height: 41px; font-size: 31px; color: #2b2b2b; white-space: nowrap; letter-spacing: -.55px; }
.cards { display: grid; grid-template-columns: 294px 294px; grid-auto-rows: 294px; gap: 24px 22px; padding: 23px 0 0 34px; }
.card { background: #fff; box-shadow: 0 2px 4px rgba(0,0,0,.18); color: #ff8486; display: flex; flex-direction: column; align-items: center; padding-top: 107px; white-space: nowrap; }
.card strong { font-size: 34.500px; line-height: 42px; font-weight: 700; letter-spacing: .05px; }
.card span { font-size: 34px; line-height: 42px; font-weight: 300; letter-spacing: 0; -webkit-text-stroke: .4px currentColor; }
.blue { background: #0092da; }
.chosen { position: relative; z-index: 2; background: linear-gradient(#009fe3, #0097dc); color: #d3e8f8; }
.steps { margin-top: 37px; height: 135px; display: grid; grid-template-columns: 271px 135px 1fr; align-items: center; color: #4c4c4c; }
.step { display: flex; align-items: center; gap: 8px; padding-left: 33px; font-size: 33.500px; font-weight: 700; letter-spacing: -.3px; line-height: 40px; }
.step svg { width: 24px; height: 24px; margin-top: -2px; }
.step span { margin-top: -6px; }
.step.next { padding: 0 34px 0 0; justify-content: flex-end; gap: 10px; }
.ring { width: 135px; height: 135px; border: 2px solid #d4d4d4; border-radius: 50%; text-align: center; line-height: 127px; font-size: 40.500px; font-weight: 700; color: #5bd300; letter-spacing: -2.500px; padding-left: 2px; }
.p12 { letter-spacing: -.9px; }
.tabs { margin-top: 24px; height: 103px; border-top: 2px solid #dadada; background: #fff; display: grid; grid-template-columns: 132px 140px 122px 132px 149px; color: #a9a9a9; }
.tab { display: flex; flex-direction: column; align-items: center; padding-top: 16px; font-family: Lato, sans-serif; font-size: 17px; line-height: 20px; }
.tab svg { margin-bottom: 10px; }
.tab.on svg { color: #ff8486; margin-top: 1px; margin-bottom: 12px; }
.i-heart { width: 40px; height: 37px; }
.i-doctor { width: 51px; height: 41px; margin-left: -9px; }
.i-me { width: 40px; height: 41px; }
.me-tab svg { margin-bottom: 12px; }
.i-pills { width: 38px; height: 43px; }
.tab .i-pills { margin-bottom: 8px; }
.i-chat { width: 42px; height: 41px; margin-left: -5px; }

/* selection frames laid over the canvas */
.highlight { position: absolute; z-index: 1; border: 4px solid rgba(92,140,205,.42); border-radius: 7px; background: linear-gradient(rgba(215,237,255,.3), rgba(61,155,236,.33)); }
.hl-card { left: 404px; top: 764px; width: 313px; height: 313px; }
.hl-board { left: 1233px; top: 155px; width: 694px; height: 1221px; }
.resize { position: absolute; left: 404px; top: 764px; }
.link { position: absolute; left: 540px; top: 908px; z-index: 3; }

/* dock */
.dock { position: absolute; z-index: 4; left: 1264px; top: 122px; width: 779px; height: 80px; padding: 12px 0 0 25.500px; border-radius: 0 0 8px 8px; background: rgba(12,12,14,.77); box-shadow: 0 2px 14px rgba(0,0,0,.12); display: flex; align-items: flex-start; }
.key { width: 54px; height: 55px; border-radius: 9px; background: linear-gradient(#fff, #f1f1f1); margin-right: 25.300px; box-shadow: 0 0 0 1px rgba(170,170,170,.5); flex: none; }
.sep { width: 1px; height: 73px; background: #7d7d7d; margin-top: -12px; flex: none; }
.s1 { margin-left: -3px; }
.app { width: 51px; height: 51px; margin-top: 2px; }
.a1 { margin-left: 24px; }
.a2 { margin-left: 28px; }
.s2 { margin-left: 23px; }
.a3 { margin-left: 24px; margin-top: 4px; }
.a4, .a5, .a6 { margin-left: 28.700px; }
.petals rect { mix-blend-mode: multiply; opacity: .9; }

/* link popover */
.popover { position: absolute; z-index: 5; left: 1472px; top: 718px; width: 547px; height: 413px; border-radius: 8px; background: radial-gradient(ellipse 185px 300px at 15px 205px, #8be0f0 0%, rgba(143,225,240,.95) 30%, rgba(168,230,239,.68) 55%, rgba(205,235,237,.3) 78%, rgba(228,238,237,0) 100%), linear-gradient(90deg, #d3ecea, #e4eeec 42%, #ececec 80%); box-shadow: 0 0 0 1px rgba(0,0,0,.22), 0 8px 26px rgba(0,0,0,.32); color: #232a2b; letter-spacing: .55px; }
.tail { position: absolute; left: -20.500px; top: 181px; }
.form { height: 319px; padding-top: 29px; border-bottom: 2px solid rgba(140,165,170,.35); display: flex; flex-direction: column; }
.line { display: flex; height: 36px; align-items: center; font-size: 22px; white-space: nowrap; }
.line label { width: 187px; text-align: right; margin-right: 16px; }
.select { height: 36px; background: #fff; border-radius: 5px; box-shadow: 0 1px 1px rgba(0,0,0,.25), 0 0 0 1px rgba(0,0,0,.08); display: flex; align-items: center; padding-left: 22px; color: #141414; overflow: hidden; }
.w251 { width: 251px; } .w316 { width: 316px; } .w248 { width: 248px; }
.si { width: 22px; height: 22px; margin-right: 14px; }
.tightl { padding-left: 17px; }
.phone { width: 27px; height: 27px; margin-right: 9px; }
.select span { flex: 1; }
.ud { width: 30px; height: 36px; background: linear-gradient(#6cb3fa, #0a7cfe); }
.check { display: flex; align-items: center; height: 24px; margin-left: 202px; gap: 9px; font-size: 19px; white-space: nowrap; }
.check i { width: 21px; height: 21px; border-radius: 4px; background: #fff; border: 1px solid #c0c4c5; }
.c1 { margin-top: 15px; }
.r2 { margin-top: 17px; }
.hint { margin: 14px 0 0 202px; font-size: 19px; line-height: 24px; }
.r3 { margin-top: 14px; }
.c2 { margin-top: 19px; }
.actions { display: flex; padding: 21px 0 0 128px; gap: 24px; }
.btn { font: 400 22px/34px Inter, sans-serif; letter-spacing: .5px; width: 123px; height: 36px; border: 1px solid #cfd2d2; border-radius: 6px; background: #fff; color: #141414; padding: 0; box-shadow: 0 1px 1px rgba(0,0,0,.15); white-space: nowrap; }
.primary { width: 145px; color: #fff; border-color: #2686f2; background: linear-gradient(#66b0fa, #0a7bfe); }
```
